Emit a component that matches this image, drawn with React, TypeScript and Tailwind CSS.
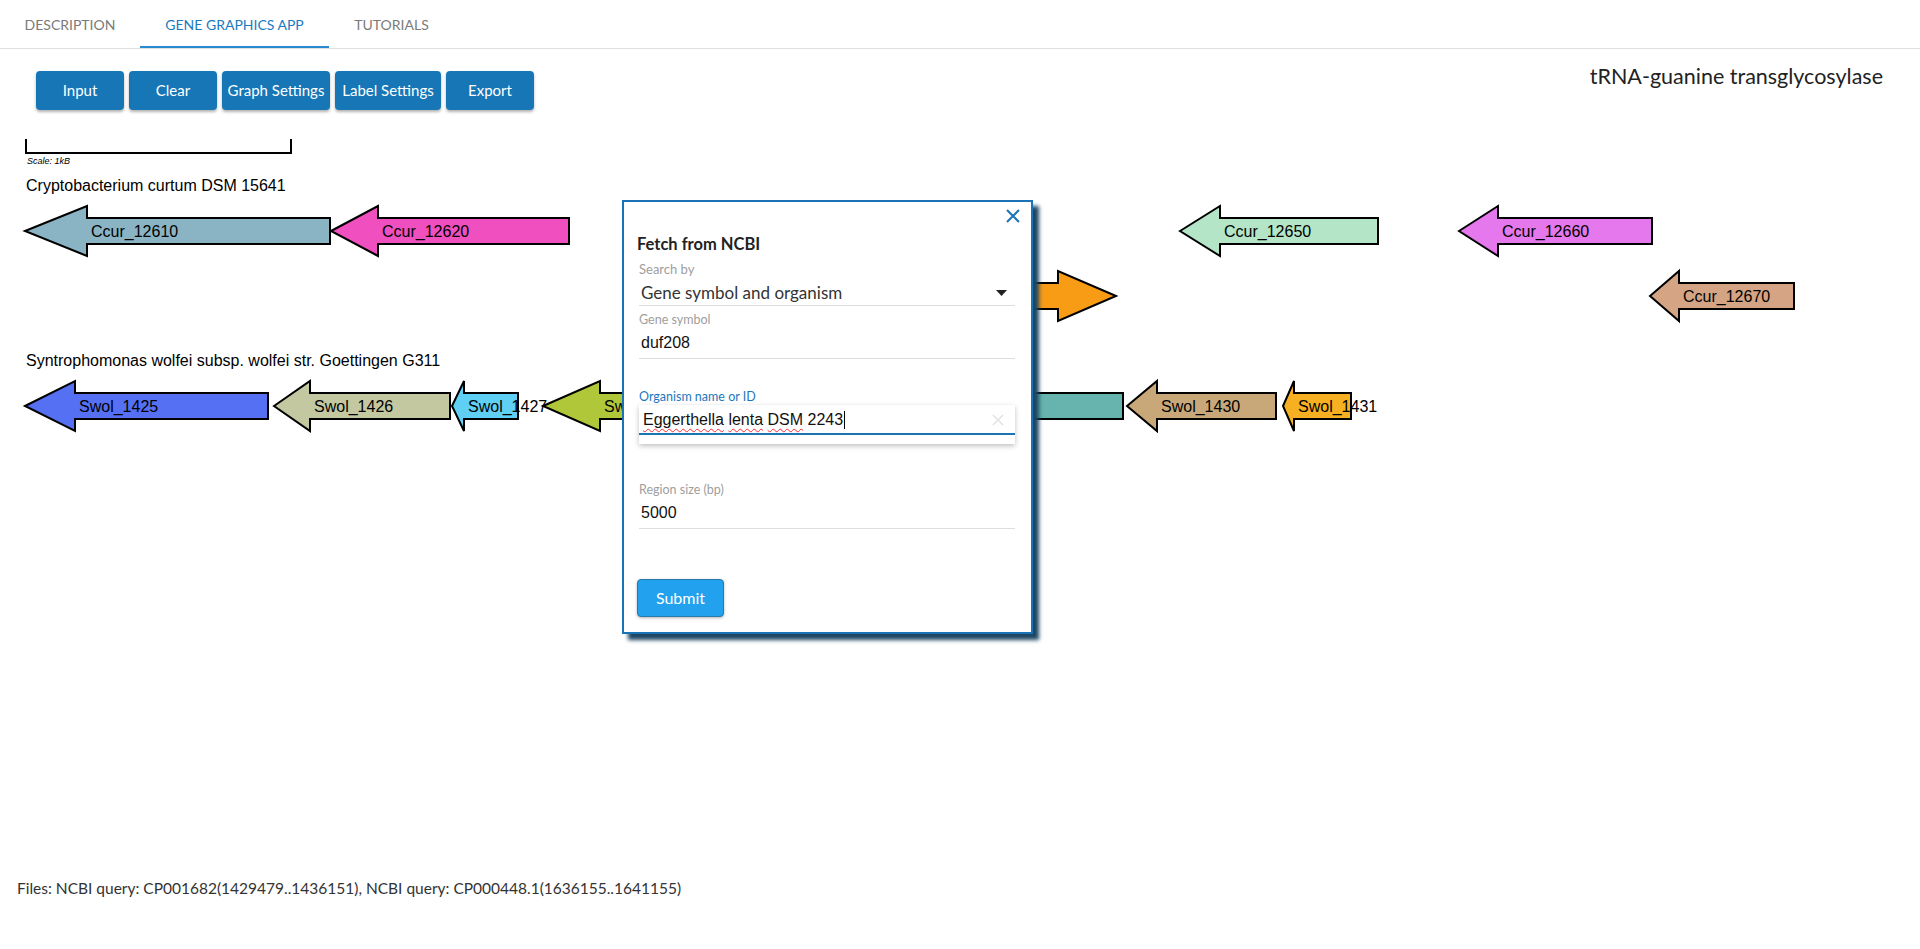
type Gene = {
  label: string;
  tip: number;
  base: number;
  end: number;
  cy: number;
  fill: string;
  hidden?: boolean;
  clip?: boolean;
};

// svg origin sits at page y = 110
const GENES: Gene[] = [
  { label: "Ccur_12610", tip: 25, base: 87, end: 330, cy: 121, fill: "#8ab4c4" },
  { label: "Ccur_12620", tip: 331, base: 378, end: 569, cy: 121, fill: "#f04fbf" },
  { label: "Ccur_12630", tip: 650, base: 700, end: 1000, cy: 121, fill: "#9fc9e0", hidden: true },
  { label: "Ccur_12650", tip: 1180, base: 1220, end: 1378, cy: 121, fill: "#b3e5c6" },
  { label: "Ccur_12660", tip: 1459, base: 1498, end: 1652, cy: 121, fill: "#e478ec" },
  { label: "Ccur_12640", tip: 1116, base: 1058, end: 860, cy: 186, fill: "#f89b15", hidden: true },
  { label: "Ccur_12670", tip: 1650, base: 1679, end: 1794, cy: 186, fill: "#d4a484" },
  { label: "Swol_1425", tip: 25, base: 75, end: 268, cy: 296, fill: "#5670f4" },
  { label: "Swol_1426", tip: 274, base: 310, end: 450, cy: 296, fill: "#c3c8a0" },
  { label: "Swol_1427", tip: 452, base: 464, end: 518, cy: 296, fill: "#5fcff4" },
  { label: "Swol_1428", tip: 543, base: 600, end: 800, cy: 296, fill: "#b0c73a", clip: true },
  { label: "Swol_1429", tip: 810, base: 850, end: 1123, cy: 296, fill: "#66b4ad", hidden: true },
  { label: "Swol_1430", tip: 1127, base: 1157, end: 1276, cy: 296, fill: "#c8a878" },
  { label: "Swol_1431", tip: 1283, base: 1294, end: 1351, cy: 296, fill: "#f7b021" },
];

function arrowPath(g: Gene) {
  const hh = 25;
  const bh = 13;
  return `M${g.tip},${g.cy} L${g.base},${g.cy - hh} L${g.base},${g.cy - bh} L${g.end},${g.cy - bh} L${g.end},${g.cy + bh} L${g.base},${g.cy + bh} L${g.base},${g.cy + hh} Z`;
}

const font = { fontFamily: "Lato, 'Open Sans', sans-serif" };
const arial = { fontFamily: "'Liberation Sans', Arial, sans-serif" };

function GeneMap() {
  return (
    <svg width={1920} height={340} className="block" style={arial}>
      <defs>
        <clipPath id="under-dialog">
          <rect x={0} y={0} width={622} height={340} />
        </clipPath>
      </defs>

      {/* scale bar */}
      <path d="M26,29 V43 H291 V29" fill="none" stroke="#000" strokeWidth={2} />
      <text x={27} y={54} fontSize={9} fontStyle="italic" fill="#000">
        Scale: 1kB
      </text>

      <text x={26} y={81} fontSize={16} fill="#000">
        Cryptobacterium curtum DSM 15641
      </text>
      <text x={26} y={256} fontSize={16} fill="#000">
        Syntrophomonas wolfei subsp. wolfei str. Goettingen G311
      </text>

      {GENES.map((g) => (
        <path key={g.label} d={arrowPath(g)} fill={g.fill} stroke="#000" strokeWidth={2} strokeLinejoin="miter" />
      ))}
      {GENES.filter((g) => !g.hidden).map((g) =>
        g.clip ? (
          <text key={g.label + "-t"} x={g.base + 4} y={g.cy + 6} fontSize={16} fill="#000" clipPath="url(#under-dialog)">
            Sw
          </text>
        ) : (
          <text key={g.label + "-t"} x={g.base + 4} y={g.cy + 6} fontSize={16} fill="#000">
            {g.label}
          </text>
        )
      )}
    </svg>
  );
}

function FetchDialog() {
  return (
    <div
      className="absolute left-[622px] top-[200px] h-[434px] w-[411px] border-2 border-[#1a73b4] bg-white shadow-[6px_6px_4px_#1d4663]"
      style={font}
    >
      <div className="flex justify-end pr-[11px] pt-[7px]">
        <svg width={14} height={14} className="block">
          <path d="M1,1 L13,13 M13,1 L1,13" stroke="#1a73b4" strokeWidth={2} />
        </svg>
      </div>
      <div className="pl-[15px] pr-[16px]">
        <h2 className="-ml-[2px] mt-[11px] text-[16.5px] leading-5 font-bold text-[#222]">Fetch from NCBI</h2>

        <div className="mt-[7px] h-4 text-[13px] leading-4 text-[#9e9e9e]">Search by</div>
        <div className="flex h-[29px] items-center justify-between border-b border-[#ddd] pt-1 pl-[2px]">
          <span className="text-[17px] leading-6 text-[#333]">Gene symbol and organism</span>
          <svg width={11} height={6} className="mr-[8px]">
            <path d="M0,0 H11 L5.5,6 Z" fill="#222" />
          </svg>
        </div>

        <div className="mt-[6px] h-4 text-[12.5px] leading-4 text-[#9e9e9e]">Gene symbol</div>
        <div className="flex h-[31px] items-center border-b border-[#ddd] pl-[2px] text-[16px] text-[#111]" style={arial}>
          duf208
        </div>

        <div className="mt-[30px] h-4 text-[12.5px] leading-4 text-[#1a78bd]">Organism name or ID</div>
        <div className="h-[39px] bg-white shadow-[0_2px_5px_rgba(0,0,0,0.25)]">
          <div
            className="flex h-[30px] items-center justify-between border-b-2 border-[#1a73b4] pl-[4px] pt-[2px] text-[16px] text-[#111]"
            style={arial}
          >
            <span className="flex items-center">
              <span className="underline decoration-wavy decoration-red-500 decoration-1 underline-offset-[3px]">Eggerthella</span>
              <span>&nbsp;</span>
              <span className="underline decoration-wavy decoration-red-500 decoration-1 underline-offset-[3px]">lenta</span>
              <span>&nbsp;</span>
              <span className="underline decoration-wavy decoration-red-500 decoration-1 underline-offset-[3px]">DSM</span>
              <span>&nbsp;2243</span>
              <span className="ml-px inline-block h-[18px] w-px bg-black" />
            </span>
            <svg width={12} height={12} className="mr-[11px]">
              <path d="M1,1 L11,11 M11,1 L1,11" stroke="#e2e2e2" strokeWidth={1.5} />
            </svg>
          </div>
        </div>

        <div className="mt-[38px] h-4 text-[12.5px] leading-4 text-[#9e9e9e]">Region size (bp)</div>
        <div className="flex h-[31px] items-center border-b border-[#ddd] pl-[2px] text-[16px] text-[#111]" style={arial}>
          5000
        </div>

        <button className="-ml-[2px] mt-[50px] h-[38px] w-[87px] rounded-[4px] border border-[#2a79a8] bg-[#22a2ee] text-[16px] text-white shadow-[0_1px_3px_rgba(0,0,0,0.3)]">
          Submit
        </button>
      </div>
    </div>
  );
}

const TABS = [
  { label: "DESCRIPTION", w: "w-[140px]", active: false },
  { label: "GENE GRAPHICS APP", w: "w-[189px]", active: true },
  { label: "TUTORIALS", w: "w-[125px]", active: false },
];

const BUTTONS = [
  { label: "Input", w: "w-[88px]" },
  { label: "Clear", w: "w-[88px]" },
  { label: "Graph Settings", w: "w-[108px]" },
  { label: "Label Settings", w: "w-[106px]" },
  { label: "Export", w: "w-[88px]" },
];

export default function App() {
  return (
    <div className="relative h-[949px] w-[1920px] overflow-hidden bg-white" style={font}>
      {/* tabs */}
      <div className="flex h-[49px] border-b border-[#e0e0e0]">
        {TABS.map((t) => (
          <div
            key={t.label}
            className={`${t.w} flex h-[48px] items-center justify-center text-[14px] ${
              t.active ? "border-b-2 border-[#2a8ad0] pt-[2px] text-[#1a7bc0]" : "text-[#7a7a7a]"
            }`}
          >
            {t.label}
          </div>
        ))}
      </div>

      {/* toolbar */}
      <div className="flex items-start justify-between pl-[36px] pr-[37px] pt-[13px]">
        <div className="mt-[9px] flex gap-[5px]">
          {BUTTONS.map((b) => (
            <button
              key={b.label}
              className={`${b.w} h-[39px] rounded-[4px] bg-[#1676b6] text-[15px] text-white shadow-[0_2px_3px_rgba(0,0,0,0.3)]`}
            >
              {b.label}
            </button>
          ))}
        </div>
        <div className="text-[21.5px] leading-7 text-[#222]">tRNA-guanine transglycosylase</div>
      </div>

      <GeneMap />

      <div className="mt-[426px] pl-[17px] text-[15.5px] leading-6 text-[#333]">
        Files: NCBI query: CP001682(1429479..1436151), NCBI query: CP000448.1(1636155..1641155)
      </div>

      <FetchDialog />
    </div>
  );
}
